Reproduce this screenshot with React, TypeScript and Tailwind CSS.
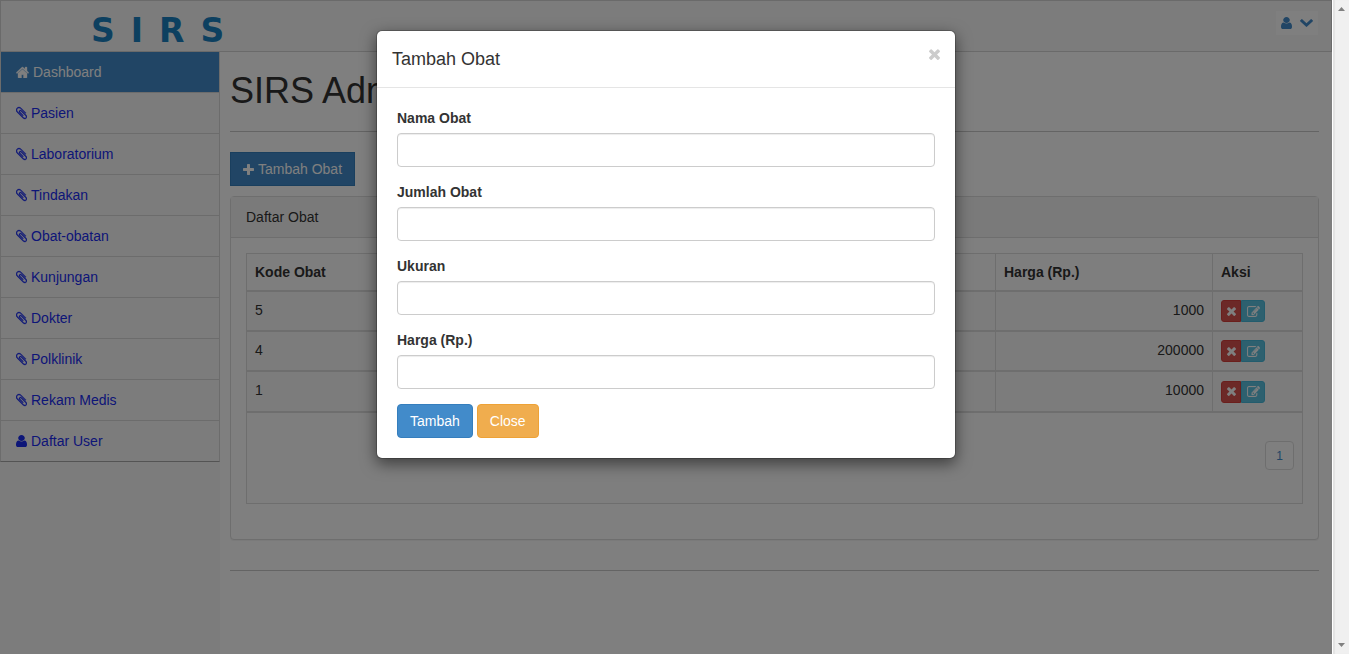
import React, { useState } from 'react';

interface IconProps {
  viewBox: string;
  d: string;
  className: string;
}

const Icon: React.FC<IconProps> = ({ viewBox, d, className }) => (
  <svg viewBox={viewBox} preserveAspectRatio="none" fill="currentColor" aria-hidden="true" className={`shrink-0 ${className}`}>
    <path d={d} />
  </svg>
);

const HomeIcon = () => (
  <Icon
    viewBox="64 128 1664 1408"
    className="w-[13px] h-3 stroke-current stroke-[40px]"
    d="M1472 992v480q0 26-19 45t-45 19h-384v-384h-256v384h-384q-26 0-45-19t-19-45v-480q0-1 .5-3t.5-3l575-474 575 474q1 2 1 6zm223-69l-62 74q-8 9-21 11h-3q-13 0-21-7l-692-577-692 577q-12 8-24 7-13-2-21-11l-62-74q-8-10-7-23.5t11-21.5l719-599q32-26 76-26t76 26l244 204v-195q0-14 9-23t23-9h192q14 0 23 9t9 23v408l219 182q10 8 11 21.5t-7 23.5z"
  />
);

const PaperclipIcon = () => (
  <Icon
    viewBox="192 0 1408 1792"
    className="w-[11px] h-[14px] stroke-current stroke-[40px]"
    d="M1596 1385q0 117-79 196t-196 79q-135 0-235-100l-777-776q-113-115-113-271 0-159 110-270t269-111q158 0 273 113l605 606q10 10 10 22 0 16-30.5 46.5t-46.5 30.5q-13 0-23-10l-606-607q-79-77-181-77-106 0-179 75t-73 181q0 105 76 181l776 777q63 63 145 63 64 0 106-42t42-106q0-82-63-145l-581-581q-26-24-60-24-29 0-48 19t-19 48q0 32 25 59l410 410q10 10 10 22 0 16-31 47t-47 31q-12 0-22-10l-410-410q-63-61-63-149 0-82 57-139t139-57q88 0 149 63l581 581q100 98 100 235z"
  />
);

const UserIcon = () => (
  <Icon
    viewBox="256 128 1280 1536"
    className="w-[11px] h-3"
    d="M1536 1399q0 109-62.5 187t-150.5 78h-854q-88 0-150.5-78t-62.5-187q0-85 8.5-160.5t31.5-152 58.5-131 94-89 134.5-34.5q131 128 313 128t313-128q76 0 134.5 34.5t94 89 58.5 131 31.5 152 8.5 160.5zm-256-887q0 159-112.5 271.5t-271.5 112.5-271.5-112.5-112.5-271.5 112.5-271.5 271.5-112.5 271.5 112.5 112.5 271.5z"
  />
);

const PlusIcon = () => (
  <Icon
    viewBox="192 128 1408 1408"
    className="w-[11px] h-[11px]"
    d="M1600 736v192q0 40-28 68t-68 28h-416v416q0 40-28 68t-68 28h-192q-40 0-68-28t-28-68v-416h-416q-40 0-68-28t-28-68v-192q0-40 28-68t68-28h416v-416q0-40 28-68t68-28h192q40 0 68 28t28 68v416h416q40 0 68 28t28 68z"
  />
);

const ChevronDownIcon = () => (
  <Icon
    viewBox="90 533 1612 1035"
    className="w-[13px] h-2"
    d="M1683 808l-742 741q-19 19-45 19t-45-19l-742-741q-19-19-19-45.5t19-45.5l166-165q19-19 45-19t45 19l531 531 531-531q19-19 45-19t45 19l166 165q19 19 19 45.5t-19 45.5z"
  />
);

const TimesIcon: React.FC<{ className: string }> = ({ className }) => (
  <Icon
    viewBox="302 344 1188 1210"
    className={className}
    d="M1490 1322q0 40-28 68l-136 136q-28 28-68 28t-68-28l-294-294-294 294q-28 28-68 28t-68-28l-136-136q-28-28-28-68t28-68l294-294-294-294q-28-28-28-68t28-68l136-136q28-28 68-28t68 28l294 294 294-294q28-28 68-28t68 28l136 136q28 28 28 68t-28 68l-294 294 294 294q28 28 28 68z"
  />
);

const EditIcon = () => (
  <Icon
    viewBox="0 128 1792 1408"
    className="w-[13px] h-[11px] stroke-current stroke-[30px]"
    d="M888 1184l116-116-152-152-116 116v56h96v96h56zm440-720q-16-16-33 1l-350 350q-17 17-1 33t33-1l350-350q17-17 1-33zm80 594v190q0 119-84.5 203.5t-203.5 84.5h-832q-119 0-203.5-84.5t-84.5-203.5v-832q0-119 84.5-203.5t203.5-84.5h832q63 0 117 25 15 7 18 23 3 17-9 29l-49 49q-14 14-32 8-23-6-45-6h-832q-66 0-113 47t-47 113v832q0 66 47 113t113 47h832q66 0 113-47t47-113v-126q0-13 9-22l64-64q15-15 35-7t20 29zm-96-738l288 288-672 672h-288v-288zm444 132l-92 92-288-288 92-92q28-28 68-28t68 28l152 152q28 28 28 68t-28 68z"
  />
);

const menu = ['Pasien', 'Laboratorium', 'Tindakan', 'Obat-obatan', 'Kunjungan', 'Dokter', 'Polklinik', 'Rekam Medis'];

const daftarObat = [
  { kode: 5, harga: 1000 },
  { kode: 4, harga: 200000 },
  { kode: 1, harga: 10000 },
];

const fields = [
  { id: 'nama', label: 'Nama Obat' },
  { id: 'jumlah', label: 'Jumlah Obat' },
  { id: 'ukuran', label: 'Ukuran' },
  { id: 'harga', label: 'Harga (Rp.)' },
];

const Navbar = () => (
  <header className="flex items-start justify-between h-[52px] bg-[#f8f8f8] border border-[#d4d4d4]">
    <a href="#" aria-label="SIRS" className="flex gap-4 pl-[90px] pt-3 text-[33px] leading-[36px] font-bold text-[#1a80c0] font-['DejaVu_Sans',sans-serif]">
      <span>S</span>
      <span>I</span>
      <span>R</span>
      <span>S</span>
    </a>
    <button type="button" aria-label="Akun" className="flex items-center gap-2 h-6 mt-[10px] mr-[13px] px-[5px] bg-white text-[#428bca]">
      <UserIcon />
      <ChevronDownIcon />
    </button>
  </header>
);

const Sidebar = () => (
  <nav className="w-[220px] shrink-0 bg-[#f8f8f8]">
    <ul className="border-x border-b border-x-[#d8d8d8] border-b-[#a8a8a8] text-[#1a2cf0]">
      <li className="border-b border-[#d8d8d8] bg-[#428bca] text-white">
        <a href="#" className="flex items-center gap-1 h-10 px-[15px]">
          <HomeIcon />
          Dashboard
        </a>
      </li>
      {menu.map((item) => (
        <li key={item} className="border-b border-[#d8d8d8]">
          <a href="#" className="flex items-center gap-1 h-10 px-[15px]">
            <PaperclipIcon />
            {item}
          </a>
        </li>
      ))}
      <li>
        <a href="#" className="flex items-center gap-1 h-10 px-[15px]">
          <UserIcon />
          Daftar User
        </a>
      </li>
    </ul>
  </nav>
);

const ObatTable = () => (
  <table className="w-full table-fixed border-separate border-spacing-0 border-t border-l border-[#dddddd] bg-[#fdfdfd]">
    <colgroup>
      <col />
      <col />
      <col />
      <col />
      <col className="w-[217px]" />
      <col className="w-[90px]" />
    </colgroup>
    <thead>
      <tr className="h-[38px] text-left">
        <th className="px-2 border-b-2 border-[#dddddd]">Kode Obat</th>
        <th className="px-2 border-b-2 border-[#dddddd]">Nama Obat</th>
        <th className="px-2 border-b-2 border-[#dddddd]">Jumlah</th>
        <th className="px-2 border-b-2 border-r border-[#dddddd]">Ukuran</th>
        <th className="px-2 border-b-2 border-r border-[#dddddd]">Harga (Rp.)</th>
        <th className="px-2 border-b-2 border-r border-[#dddddd]">Aksi</th>
      </tr>
    </thead>
    <tbody className="bg-[#f9f9f9]">
      {daftarObat.map((obat) => (
        <tr key={obat.kode} className="h-10 last:h-[41px]">
          <td className="px-2 pt-2 align-top border-b-2 border-[#dddddd]">{obat.kode}</td>
          <td className="border-b-2 border-[#dddddd]" />
          <td className="border-b-2 border-[#dddddd]" />
          <td className="border-b-2 border-r border-[#dddddd]" />
          <td className="px-2 pt-2 align-top border-b-2 border-r border-[#dddddd] text-right">{obat.harga}</td>
          <td className="px-2 border-b-2 border-r border-[#dddddd]">
            <div className="flex">
              <button type="button" aria-label="Hapus" className="flex items-center justify-center w-5 h-[22px] rounded-l-[3px] bg-[#d9534f] border border-[#d43f3a] text-white">
                <TimesIcon className="w-[9px] h-[9px]" />
              </button>
              <button type="button" aria-label="Ubah" className="flex items-center justify-center w-6 h-[22px] rounded-r-[3px] bg-[#5bc0de] border border-[#46b8da] text-white">
                <EditIcon />
              </button>
            </div>
          </td>
        </tr>
      ))}
    </tbody>
    <tfoot>
      <tr>
        <td colSpan={6} className="px-2 pt-7 pb-[33px] border-b border-r border-[#dddddd]">
          <div className="flex justify-end">
            <a href="#" className="flex items-center justify-center w-[29px] h-[29px] rounded-sm bg-white border border-[#dddddd] text-xs text-[#428bca]">
              1
            </a>
          </div>
        </td>
      </tr>
    </tfoot>
  </table>
);

const TambahObatModal: React.FC<{ onClose: () => void }> = ({ onClose }) => (
  <div className="absolute inset-0 bg-black/50">
    <div
      role="dialog"
      aria-labelledby="modal-title"
      className="w-[580px] mx-auto mt-[30px] bg-white bg-clip-padding border border-black/20 rounded-md shadow-[0_5px_15px_rgba(0,0,0,0.5)]"
    >
      <div className="flex justify-between items-start p-[15px] border-b border-[#e5e5e5]">
        <h4 id="modal-title" className="text-lg leading-[26px]">Tambah Obat</h4>
        <button type="button" aria-label="Tutup" onClick={onClose} className="pt-[3px] text-[#cccccc]">
          <TimesIcon className="w-[11px] h-[11px]" />
        </button>
      </div>
      <form className="p-5" onSubmit={(e) => e.preventDefault()}>
        {fields.map((field) => (
          <div key={field.id} className="mb-[15px]">
            <label htmlFor={field.id} className="block mb-[5px] font-bold">{field.label}</label>
            <input
              id={field.id}
              type="text"
              className="block w-full h-[34px] px-3 bg-white border border-[#cccccc] rounded-sm shadow-[inset_0_1px_1px_rgba(0,0,0,0.075)]"
            />
          </div>
        ))}
        <div className="flex gap-1">
          <button type="submit" className="h-[34px] px-3 rounded-sm bg-[#428bca] border border-[#357ebd] text-white">Tambah</button>
          <button type="button" onClick={onClose} className="h-[34px] px-3 rounded-sm bg-[#f0ad4e] border border-[#eea236] text-white">Close</button>
        </div>
      </form>
    </div>
  </div>
);

const Scrollbar = () => (
  <div aria-hidden="true" className="flex flex-col items-center justify-between w-[17px] shrink-0 py-[7px] bg-[#f0f0f0] border-l border-white shadow-[inset_2px_0_1px_#e3e3e3]">
    <svg viewBox="0 0 7 4" className="w-[7px] h-1" fill="#808080">
      <path d="M3.500 0L7 4H0z" />
    </svg>
    <svg viewBox="0 0 7 4" className="w-[7px] h-1" fill="#808080">
      <path d="M0 0h7L3.500 4z" />
    </svg>
  </div>
);

export default function App() {
  const [open, setOpen] = useState(true);

  return (
    <div className="flex h-screen text-sm leading-5 text-[#333333] font-['Liberation_Sans',Arial,sans-serif]">
      <div className="relative flex flex-col flex-1 min-w-0 overflow-hidden bg-white">
        <Navbar />
        <div className="flex flex-1">
          <Sidebar />
          <main className="flex-1 min-w-0 pl-[10px] pr-[13px]">
            <div className="pt-[19px] pb-[21px] mb-5 border-b border-[#c8c8c8]">
              <h1 className="text-4xl leading-[39px]">SIRS Admin</h1>
            </div>
            <button type="button" onClick={() => setOpen(true)} className="flex items-center gap-1 h-[34px] px-3 mb-[10px] bg-[#428bca] border border-[#357ebd] text-white">
              <PlusIcon />
              Tambah Obat
            </button>
            <section className="rounded-sm border border-[#dddddd] bg-white shadow-[0_1px_1px_rgba(0,0,0,0.05)]">
              <h3 className="px-[15px] py-[10px] bg-[#f5f5f5] border-b border-[#dddddd]">Daftar Obat</h3>
              <div className="px-[15px] pt-[15px] pb-[35px]">
                <ObatTable />
              </div>
            </section>
            <hr className="mt-[30px] border-[#c8c8c8]" />
          </main>
        </div>
        {open && <TambahObatModal onClose={() => setOpen(false)} />}
      </div>
      <Scrollbar />
    </div>
  );
}
